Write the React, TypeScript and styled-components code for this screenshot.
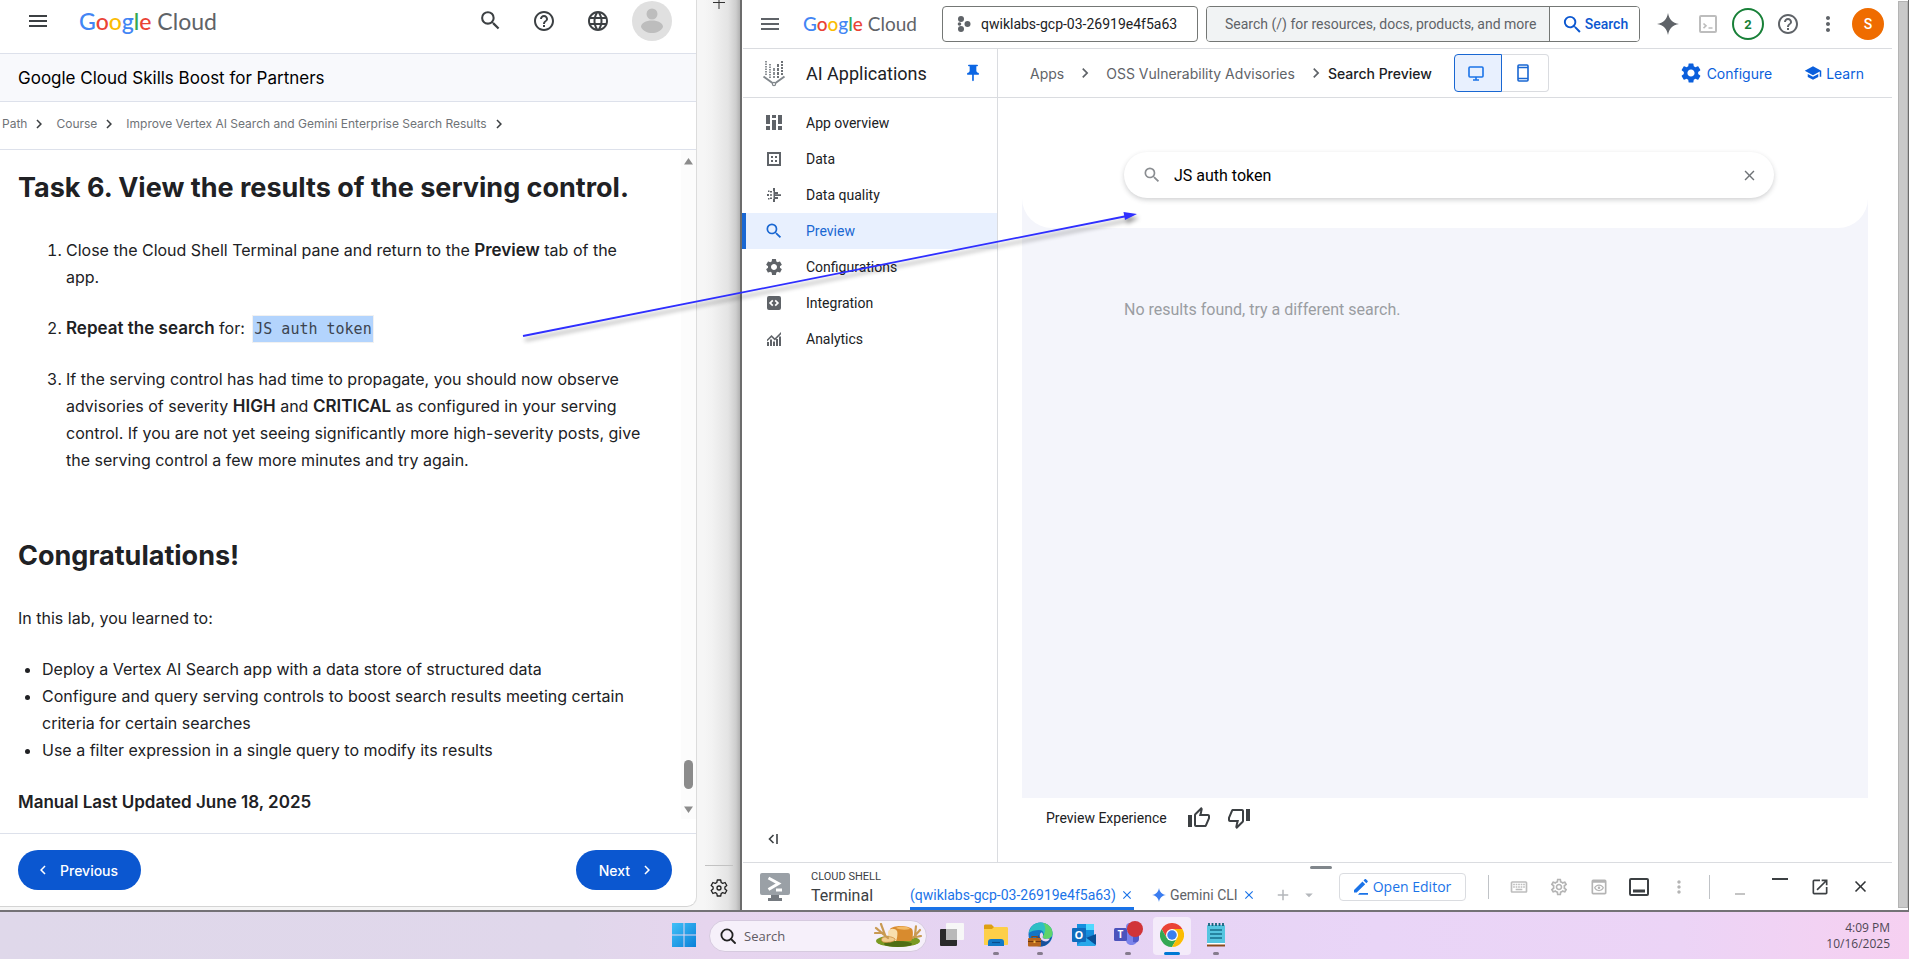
import React from "react";
import styled, { createGlobalStyle } from "styled-components";
import {
  MdAdd,
  MdArrowDropDown,
  MdChevronLeft,
  MdChevronRight,
  MdClose,
  MdHelpOutline,
  MdLanguage,
  MdMenu,
  MdMoreVert,
  MdOpenInNew,
  MdOutlineKeyboard,
  MdOutlinePreview,
  MdOutlineSettings,
  MdOutlineThumbDown,
  MdOutlineThumbUp,
  MdPushPin,
  MdSchool,
  MdSearch,
  MdSettings,
} from "react-icons/md";

const GlobalStyle = createGlobalStyle`
  *, *::before, *::after { box-sizing: border-box; }
  html, body { margin: 0; background: #fff; }
  button, input { font: inherit; color: inherit; }
  button { background: none; border: 0; padding: 0; cursor: pointer; }
  a { color: inherit; text-decoration: none; }
  svg { display: block; flex: none; }
`;

const Screen = styled.div`
  position: relative;
  display: flex;
  flex-direction: column;
  height: 100vh;
  overflow: hidden;
  font-family: Roboto, "Liberation Sans", sans-serif;
  font-size: 14px;
  color: #202124;
`;

const Desktop = styled.div`
  display: flex;
  flex: 1;
  min-height: 0;
  border-bottom: 2px solid #747276;
`;

const IconButton = styled.button<{ $size?: number; $color?: string }>`
  display: flex;
  align-items: center;
  justify-content: center;
  flex: none;
  width: ${(p) => p.$size ?? 40}px;
  height: ${(p) => p.$size ?? 40}px;
  color: ${(p) => p.$color ?? "#5f6368"};
`;

const Logo = styled.span<{ $size: number }>`
  font-family: Lato, sans-serif;
  font-size: ${(p) => p.$size}px;
  line-height: 28px;
  color: #5f6368;
  white-space: nowrap;
`;
const Tint = styled.span<{ $c: string }>`
  color: ${(p) => p.$c};
  font-weight: 500;
`;

function GoogleCloud({ size }: { size: number }) {
  return (
    <Logo $size={size}>
      <Tint $c="#4285f4">G</Tint>
      <Tint $c="#ea4335">o</Tint>
      <Tint $c="#fbbc04">o</Tint>
      <Tint $c="#4285f4">g</Tint>
      <Tint $c="#34a853">l</Tint>
      <Tint $c="#ea4335">e</Tint> Cloud
    </Logo>
  );
}

/* ---------- Lab instructions window ---------- */

const LabWindow = styled.section`
  display: flex;
  flex: 0 0 740px;
  background: linear-gradient(90deg, #f6f6f6 0 704px, #f2f2f2 712px, #e4e4e4 728px, #cdcdcd 736px, #b2b2b2 740px);
  font-family: Inter, sans-serif;
`;

const LabPage = styled.div`
  display: flex;
  flex-direction: column;
  flex: 1;
  margin-bottom: 3px;
  background: #fff;
  border-right: 1px solid #dcdcdc;
  border-bottom: 1px solid #d4d4d4;
  border-radius: 0 0 10px 0;
`;

const LabHeader = styled.header`
  display: flex;
  align-items: center;
  height: 54px;
  padding: 0 24px 12px 26px;
  border-bottom: 1px solid #dde1eb;
`;
const LabLogoLink = styled.a`
  flex: 1;
  padding-left: 29px;
`;
const LabActions = styled.div`
  display: flex;
  align-items: center;
  gap: 14px;
`;
const Avatar = styled.button`
  width: 40px;
  height: 40px;
  border-radius: 50%;
  overflow: hidden;
  background: #e0e0e0;
`;

const LabBar = styled.div`
  display: flex;
  align-items: center;
  height: 48px;
  padding: 0 18px;
  background: #f8f9fc;
  border-bottom: 1px solid #dde1eb;
  font-size: 17px;
  color: #000;
`;

const LabCrumbs = styled.nav`
  display: flex;
  align-items: center;
  gap: 3px;
  height: 48px;
  padding: 0 2px 4px;
  border-bottom: 1px solid #dde1eb;
  font-size: 12px;
  color: #6f7377;
  svg { margin-right: 5px; color: #3c4043; }
`;

const LabScroll = styled.div`
  display: flex;
  flex: 1;
  min-height: 0;
`;
const LabArticle = styled.article`
  flex: 1;
  overflow: hidden;
  padding: 20px 32px 0 18px;
  font-size: 16px;
  line-height: 27px;
  color: #202124;
  b { font-size: 17px; font-weight: 600; line-height: 1; }
`;
const Title = styled.h2`
  margin: 0;
  font-size: 27px;
  line-height: 36px;
  font-weight: 700;
`;
const Steps = styled.ol`
  margin: 31px 0 64px;
  padding-left: 48px;
  li + li { margin-top: 24px; }
`;
const Learned = styled.ul`
  margin: 24px 0 25px;
  padding-left: 24px;
`;
const Para = styled.p<{ $gap?: number }>`
  margin: ${(p) => p.$gap ?? 0}px 0 0;
`;
const Code = styled.code`
  margin-left: 4px;
  padding: 4px 1px;
  background: #b3d4fd;
  box-shadow: 0 0 0 1px #f1f1f1;
  font-family: "DejaVu Sans Mono", monospace;
  font-size: 15px;
  line-height: 1;
  color: #3c4450;
`;

const LabTrack = styled.div`
  display: flex;
  flex-direction: column;
  align-items: center;
  width: 15px;
  margin-bottom: 14px;
  padding: 8px 0 6px;
  background: #fcfcfc;
`;
const LabThumb = styled.div`
  width: 9px;
  height: 29px;
  margin: auto 0 17px;
  border-radius: 5px;
  background: #8b8b8b;
`;

const LabFooter = styled.footer`
  display: flex;
  justify-content: space-between;
  align-items: center;
  height: 73px;
  padding: 0 24px 0 18px;
  border-top: 1px solid #dde1eb;
`;
const PillButton = styled.button<{ $w: number; $end?: boolean }>`
  display: flex;
  align-items: center;
  justify-content: ${(p) => (p.$end ? "flex-end" : "flex-start")};
  gap: 8px;
  width: ${(p) => p.$w}px;
  height: 40px;
  padding: 0 16px;
  border-radius: 20px;
  background: #0b57d0;
  color: #fff;
  font-size: 14px;
  font-weight: 500;
`;

const Gutter = styled.aside`
  display: flex;
  flex-direction: column;
  align-items: center;
  width: 43px;
`;
const GutterFoot = styled.div`
  margin-top: auto;
  width: 28px;
  height: 45px;
  border-top: 1px solid #c2c2c2;
  display: flex;
  justify-content: center;
  align-items: center;
`;

function LabPane() {
  return (
    <LabWindow>
      <LabPage>
        <LabHeader>
          <IconButton $size={24} $color="#3c4043" aria-label="Menu"><MdMenu size={24} /></IconButton>
          <LabLogoLink href="#home"><GoogleCloud size={23} /></LabLogoLink>
          <LabActions>
            <IconButton $color="#3c4043" aria-label="Search"><MdSearch size={25} /></IconButton>
            <IconButton $color="#3c4043" aria-label="Help"><MdHelpOutline size={24} /></IconButton>
            <IconButton $color="#3c4043" aria-label="Language"><MdLanguage size={24} /></IconButton>
            <Avatar aria-label="Account">
              <svg width="40" height="40" viewBox="0 0 40 40" fill="#bdbdbd">
                <circle cx="20" cy="13" r="5.5" />
                <path d="M9 26c0-4 5-6.500 11-6.500s11 2.500 11 6.500c-2 4-6.500 6-11 6s-9-2-11-6z" />
              </svg>
            </Avatar>
          </LabActions>
        </LabHeader>
        <LabBar>Google Cloud Skills Boost for Partners</LabBar>
        <LabCrumbs aria-label="Breadcrumb">
          <a href="#path">Path</a><MdChevronRight size={18} />
          <a href="#course">Course</a><MdChevronRight size={18} />
          <a href="#lab">Improve Vertex AI Search and Gemini Enterprise Search Results</a><MdChevronRight size={18} />
        </LabCrumbs>
        <LabScroll>
          <LabArticle>
            <Title>Task 6. View the results of the serving control.</Title>
            <Steps>
              <li>Close the Cloud Shell Terminal pane and return to the <b>Preview</b> tab of the app.</li>
              <li><b>Repeat the search</b> for: <Code>JS auth token</Code></li>
              <li>
                If the serving control has had time to propagate, you should now observe advisories of
                severity <b>HIGH</b> and <b>CRITICAL</b> as configured in your serving control. If you are
                not yet seeing significantly more high-severity posts, give the serving control a few more
                minutes and try again.
              </li>
            </Steps>
            <Title>Congratulations!</Title>
            <Para $gap={31}>In this lab, you learned to:</Para>
            <Learned>
              <li>Deploy a Vertex AI Search app with a data store of structured data</li>
              <li>Configure and query serving controls to boost search results meeting certain criteria for certain searches</li>
              <li>Use a filter expression in a single query to modify its results</li>
            </Learned>
            <Para><b>Manual Last Updated June 18, 2025</b></Para>
          </LabArticle>
          <LabTrack aria-hidden="true">
            <svg width="9" height="7" viewBox="0 0 9 7" fill="#8b8b8b"><path d="M4.500 0 9 6.500H0z" /></svg>
            <LabThumb />
            <svg width="9" height="7" viewBox="0 0 9 7" fill="#8b8b8b"><path d="M4.500 7 0 .5h9z" /></svg>
          </LabTrack>
        </LabScroll>
        <LabFooter>
          <PillButton $w={123}><MdChevronLeft size={18} />Previous</PillButton>
          <PillButton $w={96} $end>Next<MdChevronRight size={18} /></PillButton>
        </LabFooter>
      </LabPage>
      <Gutter>
        <svg width="14" height="9" viewBox="0 0 14 9" stroke="#333" fill="none"><path d="M7 0v9M1 2.500h12" /></svg>
        <GutterFoot>
          <IconButton $size={24} $color="#222" aria-label="Sidebar settings">
            <svg width="20" height="20" viewBox="0 0 20 20" fill="none" stroke="currentColor" strokeWidth="1.300" strokeLinejoin="round">
              <path d="M8.300 2h3.400l.5 2.500 1.500.9 2.400-.9 1.700 3-1.900 1.600v1.800l1.900 1.600-1.700 3-2.400-.9-1.500.9-.5 2.500H8.300l-.5-2.500-1.500-.9-2.400.9-1.700-3 1.900-1.600V9.100L2.200 7.500l1.700-3 2.400.9 1.500-.9z" />
              <circle cx="10" cy="10" r="2" />
            </svg>
          </IconButton>
        </GutterFoot>
      </Gutter>
    </LabWindow>
  );
}

/* ---------- Cloud console window ---------- */

const ConsoleWindow = styled.section`
  display: flex;
  flex: 1;
  min-width: 0;
  padding-left: 1px;
  background: #fff;
  border-left: 2px solid #6c6c6c;
  border-right: 1px solid #6c6c6c;
`;
const Console = styled.div`
  display: flex;
  flex-direction: column;
  flex: 1;
  min-width: 0;
`;
const ConsoleTrack = styled.div`
  width: 10px;
  margin: 1px 0 2px 6px;
  background: #c9c9c9;
  border: 1px solid #b4b4b4;
`;

const TopBar = styled.header`
  display: flex;
  align-items: center;
  height: 49px;
  padding: 0 4px 0 15px;
  border-bottom: 1px solid #dadce0;
`;
const TopLogo = styled.a`
  width: 139px;
  margin-left: 21px;
`;
const ProjectButton = styled.button`
  display: flex;
  align-items: center;
  gap: 10px;
  width: 256px;
  height: 36px;
  padding: 0 14px;
  border: 1px solid #747775;
  border-radius: 4px;
  white-space: nowrap;
`;
const SearchForm = styled.form`
  display: flex;
  flex: 0 1 434px;
  height: 36px;
  margin-left: 8px;
  border: 1px solid #747775;
  border-radius: 4px;
  overflow: hidden;
`;
const TopInput = styled.input`
  flex: 1;
  min-width: 0;
  padding: 0 0 0 18px;
  border: 0;
  background: #f1f3f4;
  &::placeholder { color: #5f6368; opacity: 1; }
`;
const SearchSubmit = styled.button`
  display: flex;
  align-items: center;
  justify-content: center;
  gap: 1px;
  width: 90px;
  border-left: 1px solid #747775;
  background: #fff;
  color: #0b57d0;
  font-weight: 500;
`;
const TopActions = styled.div`
  display: flex;
  margin-left: auto;
`;
const Round = styled.span<{ $filled?: boolean }>`
  display: flex;
  align-items: center;
  justify-content: center;
  width: 32px;
  height: 32px;
  border-radius: 50%;
  border: 2px solid ${(p) => (p.$filled ? "#ef6c00" : "#188038")};
  background: ${(p) => (p.$filled ? "#ef6c00" : "#fff")};
  color: ${(p) => (p.$filled ? "#fff" : "#188038")};
  font-size: ${(p) => (p.$filled ? 14 : 13)}px;
  font-weight: ${(p) => (p.$filled ? 500 : 700)};
`;

const SubBar = styled.div`
  display: flex;
  height: 49px;
  border-bottom: 1px solid #dadce0;
`;
const Product = styled.div`
  display: flex;
  align-items: center;
  width: 255px;
  padding: 0 14px 0 19px;
  border-right: 1px solid #dadce0;
  font-size: 18px;
`;
const ProductName = styled.span`
  flex: 1;
  padding-left: 20px;
`;
const Crumbs = styled.nav`
  display: flex;
  align-items: center;
  gap: 11px;
  flex: 1;
  padding: 0 28px 0 32px;
  font-family: Inter, sans-serif;
  color: #5f6368;
  white-space: nowrap;
`;
const Current = styled.span`
  display: flex;
  align-items: center;
  gap: 2px;
  color: #202124;
  font-weight: 500;
  svg { color: #5f6368; }
`;
const Toggle = styled.div`
  display: flex;
  margin: 0 auto 0 11px;
`;
const ToggleButton = styled.button<{ $on?: boolean }>`
  display: flex;
  align-items: center;
  justify-content: center;
  width: ${(p) => (p.$on ? 48 : 47)}px;
  height: 38px;
  padding-right: 4px;
  border: 1px solid ${(p) => (p.$on ? "#1967d2" : "#dadce0")};
  border-left-width: ${(p) => (p.$on ? 1 : 0)}px;
  border-radius: ${(p) => (p.$on ? "4px 0 0 4px" : "0 4px 4px 0")};
  background: ${(p) => (p.$on ? "#e8f0fe" : "#fff")};
  color: #1a73e8;
`;
const BarLink = styled.a`
  display: flex;
  align-items: center;
  gap: 4px;
  margin-left: 21px;
  color: #0b5fdc;
`;

const Body = styled.div`
  display: flex;
  flex: 1;
  min-height: 0;
`;
const Side = styled.aside`
  display: flex;
  flex-direction: column;
  width: 255px;
  padding: 7px 0 11px;
  border-right: 1px solid #dadce0;
`;
const NavLink = styled.a<{ $on?: boolean }>`
  display: flex;
  align-items: center;
  gap: 22px;
  height: 36px;
  margin-left: ${(p) => (p.$on ? -1 : 0)}px;
  padding-left: ${(p) => (p.$on ? 18 : 21)}px;
  border-left: ${(p) => (p.$on ? "4px solid #1967d2" : "0")};
  background: ${(p) => (p.$on ? "#e8f0fe" : "none")};
  color: ${(p) => (p.$on ? "#1967d2" : "#202124")};
  svg { color: ${(p) => (p.$on ? "#1967d2" : "#5f6368")}; }
`;
const Collapse = styled.div`
  margin-top: auto;
  padding-left: 18px;
`;

const Main = styled.main`
  display: flex;
  flex-direction: column;
  flex: 1;
  min-width: 0;
  padding: 0 24px;
`;
const Results = styled.div`
  flex: 1;
  background: #f4f5fb;
`;
const Head = styled.div`
  padding: 54px 94px 30px 102px;
  background: #fff;
  border-radius: 0 0 30px 30px;
`;
const SearchPill = styled.form`
  display: flex;
  align-items: center;
  height: 46px;
  padding: 0 16px 0 18px;
  border-radius: 23px;
  background: #fff;
  box-shadow: 0 2px 5px rgba(60, 64, 67, 0.24);
  font-size: 16px;
  color: #8a8d91;
`;
const PillInput = styled.input`
  flex: 1;
  min-width: 0;
  padding: 0 0 0 12px;
  border: 0;
  outline: 0;
  background: none;
  color: #000;
`;
const Empty = styled.p`
  margin: 70px 102px 0;
  font-size: 16px;
  line-height: 24px;
  color: #9a9da2;
`;
const Feedback = styled.div`
  display: flex;
  align-items: center;
  height: 40px;
  margin-bottom: 24px;
  padding-left: 24px;
`;
const FeedbackLabel = styled.span`
  margin-right: 12px;
`;

const Shell = styled.footer`
  position: relative;
  display: flex;
  align-items: center;
  height: 48px;
  padding: 0 12px 0 17px;
  border-top: 1px solid #dadce0;
  color: #3c4043;
`;
const DragHandle = styled.span`
  position: absolute;
  top: 3px;
  left: calc(50% - 8px);
  width: 22px;
  height: 3px;
  border-radius: 2px;
  background: #80868b;
`;
const ShellName = styled.div`
  display: flex;
  flex-direction: column;
  width: 99px;
  margin-left: 21px;
  font-size: 16px;
  line-height: 20px;
`;
const Overline = styled.span`
  font-size: 11px;
  line-height: 18px;
`;
const Tabs = styled.div`
  display: flex;
  align-self: stretch;
`;
const Tab = styled.div<{ $on?: boolean }>`
  display: flex;
  align-items: center;
  gap: 4px;
  margin-right: 18px;
  padding-top: ${(p) => (p.$on ? 19 : 16)}px;
  border-bottom: ${(p) => (p.$on ? "3px solid #1a73e8" : "0")};
  color: ${(p) => (p.$on ? "#1a73e8" : "#5f6368")};
  white-space: nowrap;
`;
const TabGlyphs = styled.div`
  display: flex;
  align-items: center;
  gap: 8px;
  padding-top: 16px;
`;
const ShellRight = styled.div`
  display: flex;
  align-items: center;
  margin-left: auto;
`;
const EditorButton = styled.button`
  display: flex;
  align-items: center;
  justify-content: center;
  gap: 4px;
  width: 127px;
  height: 28px;
  margin-right: 22px;
  border: 1px solid #dadce0;
  border-radius: 4px;
  color: #1a73e8;
  font-family: "Open Sans", sans-serif;
`;
const Divider = styled.span`
  width: 1px;
  height: 24px;
  margin: 0 10px;
  background: #c0c3c7;
  &:first-of-type { margin-left: 0; }
`;

const navIcons = {
  overview: (
    <path d="M2 2h4v9H2zM2 13h4v4H2zM8 2h4v3H8zM8 7h4v10H8zM14 2h4v9h-4zM14 13h4v4h-4z" />
  ),
  data: (
    <path fillRule="evenodd" d="M3 3h14v14H3zM5 5v10h10V5zM7 7h2v2H7zM11 7h2v2h-2zM7 11h2v2H7zM11 11h2v2h-2z" />
  ),
  quality: (
    <path d="M9 3h2v3H9zM9.500 6h1.500v8H9.500zM9 14h2v3H9zM11 7h3v2h-3zM11 9.200h6v1.800h-6zM11 12h3v2h-3zM3 9h2v2H3zM6 6h2v1.500H6zM6 9.200h2v1.500H6zM6 12.500h2V14H6zM4 5.500h1.500V7H4zM4 13h1.500v1.500H4z" />
  ),
  integration: (
    <path fillRule="evenodd" d="M5 3h10a2 2 0 0 1 2 2v10a2 2 0 0 1-2 2H5a2 2 0 0 1-2-2V5a2 2 0 0 1 2-2zM8.200 6.700 4.900 10l3.300 3.300 1.200-1.200L7.300 10l2.100-2.100zM11.800 6.700l-1.200 1.200L12.700 10l-2.100 2.100 1.200 1.200L15.100 10z" />
  ),
  analytics: (
    <path d="M3 13h2v4H3zM6 10.500h2V17H6zM9 12.500h2V17H9zM12 10h2v7h-2zM15 7.500h2V17h-2zM3 10.500 7.500 6l3.300 3.200L17 3v2.200l-6.200 6.300L7.500 8.300 3 12.500z" />
  ),
};

function NavGlyph({ name }: { name: keyof typeof navIcons }) {
  return <svg width="20" height="20" viewBox="0 0 20 20" fill="currentColor">{navIcons[name]}</svg>;
}

function ProductGlyph() {
  return (
    <svg width="24" height="28" viewBox="0 0 24 28" fill="none" stroke="#80868b">
      <path d="M4 2v14" strokeWidth="1.800" strokeDasharray="1.500 1" />
      <path d="M8 5v14" strokeWidth="1.800" strokeDasharray="1.500 1" />
      <path d="M12 9v10" strokeWidth="1.800" strokeDasharray="3 1" />
      <path d="M16 5v14" strokeWidth="1.800" strokeDasharray="3 1" stroke="#5f6368" />
      <path d="M20 2v14" strokeWidth="1.800" strokeDasharray="2 1" stroke="#5f6368" />
      <path d="m1.500 17.500 9 6.500M22.500 17.500l-9 6.500" strokeWidth="2" />
      <circle cx="12" cy="25" r="1.600" strokeWidth="1.200" />
    </svg>
  );
}

function Spark({ size, color }: { size: number; color: string }) {
  return (
    <svg width={size} height={size} viewBox="0 0 24 24" fill={color}>
      <path d="M12 0c1.300 7.200 4.800 10.700 12 12-7.200 1.300-10.700 4.800-12 12-1.300-7.200-4.800-10.700-12-12C7.200 10.700 10.700 7.200 12 0z" />
    </svg>
  );
}

function ConsolePane() {
  return (
    <ConsoleWindow>
      <Console>
        <TopBar>
          <IconButton $size={24} aria-label="Navigation menu"><MdMenu size={24} /></IconButton>
          <TopLogo href="#console"><GoogleCloud size={19} /></TopLogo>
          <ProjectButton>
            <svg width="14" height="16" viewBox="0 0 14 16" fill="#5f6368">
              <circle cx="4" cy="3" r="3" /><circle cx="10.500" cy="8" r="3" /><circle cx="4" cy="13" r="3" /><circle cx="2.500" cy="8" r="1.800" />
            </svg>
            qwiklabs-gcp-03-26919e4f5a63
          </ProjectButton>
          <SearchForm>
            <TopInput aria-label="Search resources" placeholder="Search (/) for resources, docs, products, and more" />
            <SearchSubmit type="button"><MdSearch size={23} />Search</SearchSubmit>
          </SearchForm>
          <TopActions>
            <IconButton aria-label="Gemini"><Spark size={22} color="#5f6368" /></IconButton>
            <IconButton $color="#bdbdbd" aria-label="Cloud Shell">
              <svg width="18" height="18" viewBox="0 0 18 18" fill="none" stroke="currentColor" strokeWidth="2">
                <rect x="1" y="1" width="16" height="16" rx="1" />
                <path d="m4.500 8.500 2.500 2.300-2.500 2.300M9.500 13h4" strokeWidth="1.600" />
              </svg>
            </IconButton>
            <IconButton aria-label="Notifications"><Round>2</Round></IconButton>
            <IconButton aria-label="Help"><MdHelpOutline size={24} /></IconButton>
            <IconButton aria-label="More"><MdMoreVert size={24} /></IconButton>
            <IconButton aria-label="Account"><Round $filled>S</Round></IconButton>
          </TopActions>
        </TopBar>
        <SubBar>
          <Product>
            <ProductGlyph />
            <ProductName>AI Applications</ProductName>
            <IconButton $size={20} $color="#0b66e4" aria-label="Unpin"><MdPushPin size={20} /></IconButton>
          </Product>
          <Crumbs aria-label="Page">
            <a href="#apps">Apps</a><MdChevronRight size={20} />
            <a href="#oss">OSS Vulnerability Advisories</a>
            <Current><MdChevronRight size={20} />Search Preview</Current>
            <Toggle>
              <ToggleButton $on aria-label="Desktop">
                <svg width="16" height="15" viewBox="0 0 16 15" fill="none" stroke="currentColor" strokeWidth="1.600">
                  <rect x="1" y="1" width="14" height="10" rx="1" /><path d="M8 11v3M5 14h6" />
                </svg>
              </ToggleButton>
              <ToggleButton aria-label="Mobile">
                <svg width="12" height="18" viewBox="0 0 12 18" fill="none" stroke="#1967d2" strokeWidth="1.600">
                  <rect x="1" y="1" width="10" height="16" rx="1" /><path d="M1 3.500h10M1 14.500h10" />
                </svg>
              </ToggleButton>
            </Toggle>
            <BarLink href="#configure"><MdSettings size={24} />Configure</BarLink>
            <BarLink href="#learn"><MdSchool size={18} />Learn</BarLink>
          </Crumbs>
        </SubBar>
        <Body>
          <Side>
            <NavLink href="#overview"><NavGlyph name="overview" />App overview</NavLink>
            <NavLink href="#data"><NavGlyph name="data" />Data</NavLink>
            <NavLink href="#quality"><NavGlyph name="quality" />Data quality</NavLink>
            <NavLink href="#preview" $on><MdSearch size={20} />Preview</NavLink>
            <NavLink href="#config"><MdSettings size={20} />Configurations</NavLink>
            <NavLink href="#integration"><NavGlyph name="integration" />Integration</NavLink>
            <NavLink href="#analytics"><NavGlyph name="analytics" />Analytics</NavLink>
            <Collapse>
              <IconButton $size={24} $color="#3c4043" aria-label="Collapse menu">
                <svg width="12" height="12" viewBox="0 0 12 12" fill="none" stroke="currentColor" strokeWidth="1.600">
                  <path d="M6.500 2 2.500 6l4 4M10 1v10" />
                </svg>
              </IconButton>
            </Collapse>
          </Side>
          <Main>
            <Results>
              <Head>
                <SearchPill>
                  <MdSearch size={20} />
                  <PillInput aria-label="Search the app" defaultValue="JS auth token" />
                  <IconButton type="button" $size={18} $color="#6f7377" aria-label="Clear"><MdClose size={17} /></IconButton>
                </SearchPill>
              </Head>
              <Empty>No results found, try a different search.</Empty>
            </Results>
            <Feedback>
              <FeedbackLabel>Preview Experience</FeedbackLabel>
              <IconButton $color="#3c4043" aria-label="Good"><MdOutlineThumbUp size={24} /></IconButton>
              <IconButton $color="#3c4043" aria-label="Bad"><MdOutlineThumbDown size={24} /></IconButton>
            </Feedback>
          </Main>
        </Body>
        <Shell>
          <DragHandle />
          <svg width="30" height="28" viewBox="0 0 30 28" fill="#9aa0a6">
            <rect width="30" height="22" rx="2" />
            <path d="M11 22h8v3h3v3H8v-3h3z" fill="#757a80" />
            <path d="m8.500 5 10 5.500-10 6" fill="none" stroke="#fff" strokeWidth="3" />
            <path d="M16 15.500h6v3h-6z" fill="#fff" />
          </svg>
          <ShellName><Overline>CLOUD SHELL</Overline>Terminal</ShellName>
          <Tabs>
            <Tab $on>
              (qwiklabs-gcp-03-26919e4f5a63)
              <IconButton $size={14} $color="#1a73e8" aria-label="Close terminal tab"><MdClose size={14} /></IconButton>
            </Tab>
            <Tab>
              <Spark size={14} color="#3b7df0" />
              Gemini CLI
              <IconButton $size={14} $color="#1a73e8" aria-label="Close Gemini tab"><MdClose size={14} /></IconButton>
            </Tab>
            <TabGlyphs>
              <IconButton $size={18} $color="#b4b7bb" aria-label="New tab"><MdAdd size={18} /></IconButton>
              <IconButton $size={18} $color="#b4b7bb" aria-label="Tab menu"><MdArrowDropDown size={18} /></IconButton>
            </TabGlyphs>
          </Tabs>
          <ShellRight>
            <EditorButton>
              <svg width="15" height="16" viewBox="0 0 15 16" fill="currentColor">
                <path d="M0 13.500V11l8.500-8.500 2.700 2.700L2.700 13.500zM9.500 1.500l1.200-1.200c.4-.4.900-.4 1.300 0l1.500 1.500c.4.4.4.9 0 1.300l-1.200 1.200zM5.500 14H14v1.700H4z" />
              </svg>
              Open Editor
            </EditorButton>
            <Divider />
            <IconButton $color="#bdbdbd" aria-label="Keyboard"><MdOutlineKeyboard size={20} /></IconButton>
            <IconButton $color="#b4b4b4" aria-label="Terminal settings"><MdOutlineSettings size={20} /></IconButton>
            <IconButton $color="#b4b4b4" aria-label="Web preview"><MdOutlinePreview size={20} /></IconButton>
            <IconButton $color="#3c4043" aria-label="Panel position">
              <svg width="20" height="18" viewBox="0 0 20 18" fill="none" stroke="currentColor" strokeWidth="2">
                <rect x="1" y="1" width="18" height="16" rx="1" /><path d="M4 13h12" strokeWidth="3" />
              </svg>
            </IconButton>
            <IconButton $color="#b4b4b4" aria-label="Terminal options"><MdMoreVert size={20} /></IconButton>
            <Divider />
            <IconButton $color="#c4c4c4" aria-label="Minimize">
              <svg width="20" height="20" viewBox="0 0 20 20" stroke="currentColor" strokeWidth="2"><path d="M5 17h10" /></svg>
            </IconButton>
            <IconButton $color="#3c4043" aria-label="Maximize">
              <svg width="20" height="20" viewBox="0 0 20 20" stroke="currentColor" strokeWidth="2"><path d="M2 2h16" /></svg>
            </IconButton>
            <IconButton $color="#3c4043" aria-label="Open in new window"><MdOpenInNew size={20} /></IconButton>
            <IconButton $color="#303336" aria-label="Close"><MdClose size={19} /></IconButton>
          </ShellRight>
        </Shell>
      </Console>
      <ConsoleTrack aria-hidden="true" />
    </ConsoleWindow>
  );
}

/* ---------- Taskbar ---------- */

const Taskbar = styled.footer`
  display: grid;
  grid-template-columns: 1fr auto 1fr;
  align-items: center;
  height: 47px;
  padding-right: 9px;
  background: linear-gradient(90deg, #dfd8ea 0%, #e0d7eb 30%, #e6d5ee 37%, #e5d3f3 55%, #e9d5f7 72%, #ecd4f6 88%, #f6d0f1 100%);
  font-family: "Open Sans", sans-serif;
`;
const Apps = styled.div`
  grid-column: 2;
  display: flex;
  align-items: center;
`;
const TaskApp = styled.button<{ $active?: boolean; $running?: boolean }>`
  position: relative;
  display: flex;
  align-items: center;
  justify-content: center;
  width: 38px;
  height: 38px;
  margin: 0 3px;
  padding-bottom: 2px;
  border-radius: 4px;
  background: ${(p) => (p.$active ? "#f4ebfa" : "none")};
  &::after {
    content: "";
    position: absolute;
    bottom: 0;
    left: ${(p) => (p.$active ? 11 : 16)}px;
    width: ${(p) => (p.$active ? 16 : 6)}px;
    height: 3px;
    border-radius: 2px;
    background: ${(p) => (p.$active ? "#0078d4" : p.$running ? "#857b8d" : "transparent")};
  }
`;
const TaskSearch = styled.label`
  display: flex;
  align-items: center;
  width: 218px;
  height: 32px;
  margin: 0 3px;
  padding: 0 4px 0 10px;
  border: 1px solid #d6cadf;
  border-radius: 16px;
  background: #f6f0fa;
  color: #222;
`;
const TaskInput = styled.input`
  flex: 1;
  min-width: 0;
  padding: 0 0 0 8px;
  border: 0;
  background: none;
  font-size: 13px;
  &::placeholder { color: #5f5b63; opacity: 1; }
`;
const Clock = styled.time`
  justify-self: end;
  padding-right: 10px;
  font-size: 12px;
  line-height: 16px;
  text-align: right;
  color: #4f4755;
`;

function TaskbarPane() {
  return (
    <Taskbar>
      <Apps>
        <TaskApp aria-label="Start">
          <svg width="24" height="24" viewBox="0 0 24 24">
            <defs>
              <linearGradient id="win" x1="0" y1="0" x2="1" y2="1" gradientUnits="objectBoundingBox">
                <stop offset="0" stopColor="#41c0f8" /><stop offset="1" stopColor="#0a80d8" />
              </linearGradient>
            </defs>
            <path fill="url(#win)" d="M0 0h11.500v11.500H0zM12.500 0H24v11.500H12.500zM0 12.500h11.500V24H0zM12.500 12.500H24V24H12.500z" />
          </svg>
        </TaskApp>
        <TaskSearch>
          <svg width="16" height="16" viewBox="0 0 16 16" fill="none" stroke="currentColor" strokeWidth="1.800" strokeLinecap="round">
            <circle cx="7" cy="7" r="5.600" /><path d="m11 11 4 4" />
          </svg>
          <TaskInput aria-label="Search the computer" placeholder="Search" />
          <svg width="48" height="25" viewBox="0 0 48 25">
            <ellipse cx="24" cy="18" rx="22" ry="6" fill="#7a9a22" />
            <ellipse cx="24" cy="21" rx="14" ry="3" fill="#4f6d14" />
            <path d="M16 6c3-4 18-4 22 0 1.500 2 1 10-1 12H18z" fill="#d88b2e" />
            <path d="M22 5c4-2 11-2 14 1-4 1-10 1-14-1z" fill="#f3bb66" />
            <path d="M14 9c1-4 7-4 9-1 1 2 0 8-1 10h-7z" fill="#f8dfae" />
            <path d="M8 15c3-2 10-2 13 1 1 3-8 4-12 3-2-1-2-3-1-4z" fill="#f1cd8f" stroke="#c98335" strokeWidth=".7" />
            <path d="M14 15 2 5M11 12 7 1M8 10 1 10M39 15l7-8M41 12l1-9M42 14l5-1" stroke="#c99a52" strokeWidth="2.200" strokeDasharray="2.500 .6" strokeLinecap="round" />
          </svg>
        </TaskSearch>
        <TaskApp aria-label="Task view">
          <svg width="24" height="24" viewBox="0 0 24 24">
            <rect x="0" y="6" width="17" height="17" rx="1" fill="#2a2a2a" />
            <rect x="6" y="0" width="18" height="17" rx="1" fill="#f7f7f7" />
            <rect x="6" y="6" width="11" height="11" fill="#b9b9b9" />
          </svg>
        </TaskApp>
        <TaskApp $running aria-label="File Explorer">
          <svg width="24" height="24" viewBox="0 0 24 24">
            <path d="M0 3c0-1 .5-1.500 1.500-1.500h6L10 4h12v5H0z" fill="#dd9f12" />
            <path d="M0 6h8l2-2h12.500c1 0 1.500.5 1.500 1.500V21c0 .6-.5 1-1 1H1c-.6 0-1-.4-1-1z" fill="#fdcf48" />
            <path d="M4 23v-4c0-2 1-3 3-3h10c2 0 3 1 3 3v4z" fill="#1279c6" />
            <path d="M8 19.500h8" stroke="#0a4d8c" strokeWidth="1.200" />
          </svg>
        </TaskApp>
        <TaskApp $running aria-label="Edge">
          <svg width="25" height="25" viewBox="0 0 25 25">
            <circle cx="12.500" cy="12.500" r="12" fill="#1275c4" />
            <path d="M.8 11C2 4 7 .5 12.500.5 19 .5 24.500 5 24.500 11c0 4-3 6-6.500 6-3 0-4-1.500-3-3 1.500-3 0-6-4-6S3 9 .8 11z" fill="#2fbfc4" />
            <path d="M15 1c6 1 9.500 5.500 9.500 10 0 4-3 6-6.500 6-3 0-4-1.500-3-3 2-3 4-8 0-13z" fill="#5fd36a" />
            <path d="M15 14c-1 1.500 0 3 3 3 2 0 4-.5 5.500-2-1 5-6 9.500-11 9.500L9 17c0-4 4-6 6.500-5z" fill="#174f9a" />
            <path d="M15 14c-1 1.500 0 3 3 3l4-.4c-1.500 3-4 3.400-6.500 2.400S11 15 12 12s3.500-1.500 3 2z" fill="#e7d5f4" />
            <rect x="0" y="16" width="13" height="8.500" rx="1" fill="#b5651d" />
            <path d="M4 16v-1.500h5V16" fill="none" stroke="#8a4510" strokeWidth="1.200" />
            <path d="M0 19.500h13" stroke="#6f370c" /><path d="M5.500 18.500h2v2.500h-2z" fill="#f4b942" />
          </svg>
        </TaskApp>
        <TaskApp aria-label="Outlook">
          <svg width="24" height="24" viewBox="0 0 24 24">
            <path d="M5 1h17v11H5z" fill="#1490df" /><path d="M14 1h8v6h-8z" fill="#50d9ff" />
            <path d="M5 12h18.500v9.500c0 .8-.5 1.500-1.500 1.500H6.500C5.500 23 5 22.500 5 21.500z" fill="#1a86d6" />
            <path d="M24 11v11L14 15z" fill="#0a4f96" /><path d="m5 22 9.500-7L24 22.500 22 23H6z" fill="#28a8ea" />
            <rect x="0" y="5" width="14" height="14" rx="1" fill="#0f6cbd" />
            <text x="7" y="16" textAnchor="middle" fontFamily="Open Sans, sans-serif" fontWeight="700" fontSize="11" fill="#fff">O</text>
          </svg>
        </TaskApp>
        <TaskApp $running aria-label="Teams">
          <svg width="30" height="28" viewBox="0 0 30 28">
            <path d="M13 10h11v9c0 3-2.500 5-5.500 5S13 22 13 19z" fill="#7b83eb" />
            <circle cx="17" cy="6" r="4" fill="#7b83eb" />
            <path d="M20 11h6v7c0 2-1.500 3.500-3.500 3.500L20 21z" fill="#5059c9" />
            <rect x="1" y="7" width="13" height="13" rx="1.500" fill="#4b53bc" />
            <text x="7.500" y="17" textAnchor="middle" fontFamily="Open Sans, sans-serif" fontWeight="700" fontSize="10" fill="#fff">T</text>
            <circle cx="22" cy="8" r="8" fill="#d13438" />
          </svg>
        </TaskApp>
        <TaskApp $active aria-label="Chrome">
          <svg width="24" height="24" viewBox="0 0 48 48">
            <circle cx="24" cy="24" r="24" fill="#fff" />
            <path d="M24 12h20.800A24 24 0 0 0 3.200 12l10.400 18z" fill="#ea4335" />
            <path d="M13.600 30 3.200 12A24 24 0 0 0 24 48l10.400-18z" fill="#34a853" />
            <path d="M34.400 30 24 48a24 24 0 0 0 20.800-36H24z" fill="#fbbc04" />
            <circle cx="24" cy="24" r="12" fill="#fff" />
            <circle cx="24" cy="24" r="9.500" fill="#3b7ff0" />
          </svg>
        </TaskApp>
        <TaskApp $running aria-label="Notepad">
          <svg width="20" height="24" viewBox="0 0 20 24">
            <rect x="1" y="2" width="18" height="19" rx="1" fill="#55c5e0" />
            <path d="M1 20.500h18v3H1z" fill="#8b4a1c" /><path d="M1 20h18v1.500H1z" fill="#fff" />
            <path d="M3 0v3M6.500 0v3M10 0v3M13.500 0v3M17 0v3" stroke="#17627c" strokeWidth="1.800" />
            <path d="M4 7h12M4 11h12M4 15h12" stroke="#176f8c" strokeWidth="1.500" />
          </svg>
        </TaskApp>
      </Apps>
      <Clock>4:09 PM<br />10/16/2025</Clock>
    </Taskbar>
  );
}

/* Annotation arrow drawn across both windows */
const Annotation = styled.svg`
  position: absolute;
  top: 204px;
  left: 515px;
  pointer-events: none;
  filter: drop-shadow(2px 4px 2px rgba(0, 0, 0, 0.4));
`;

export default function App() {
  return (
    <Screen>
      <GlobalStyle />
      <Desktop>
        <LabPane />
        <ConsolePane />
      </Desktop>
      <TaskbarPane />
      <Annotation width="640" height="145" viewBox="0 0 640 145" aria-hidden="true">
        <path d="M8 132 612 12" stroke="#2f2fff" strokeWidth="1.800" />
        <path d="m622 10-12 6-1.500-8z" fill="#2f2fff" />
      </Annotation>
    </Screen>
  );
}
